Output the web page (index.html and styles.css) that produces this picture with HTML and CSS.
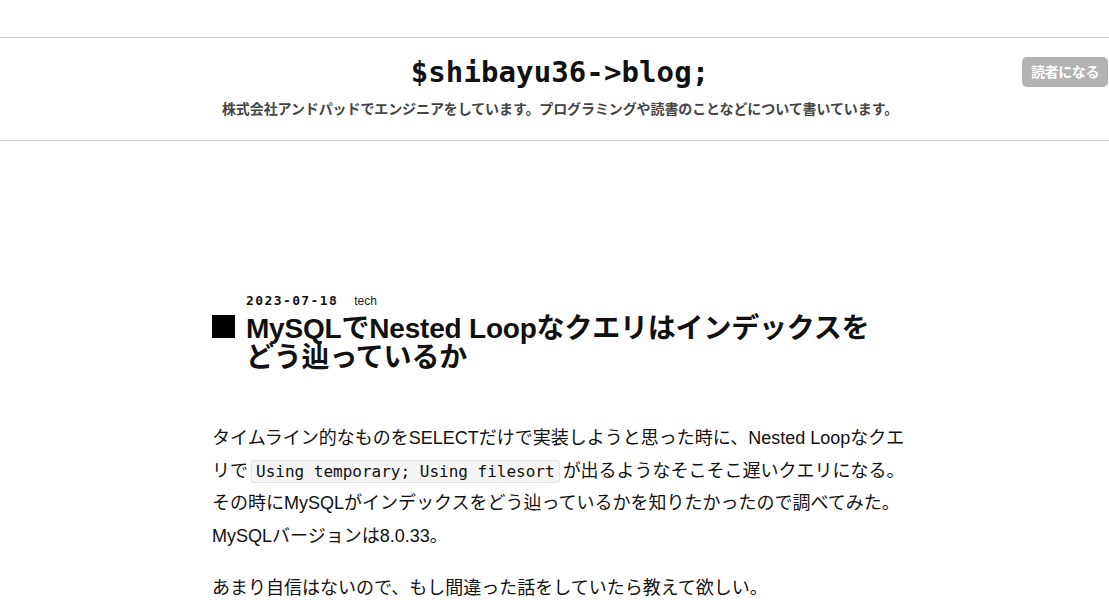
FILE: index.html
```html
<!DOCTYPE html>
<html lang="ja">
<head>
<meta charset="utf-8">
<title>$shibayu36->blog;</title>
<link rel="stylesheet" href="styles.css">
</head>
<body>
<div class="topbar"></div>
<header class="blog-header">
  <h1 class="blog-title">$shibayu36-&gt;blog;</h1>
  <p class="blog-desc">株式会社アンドパッドでエンジニアをしています。プログラミングや読書のことなどについて書いています。</p>
  <a class="subscribe">読者になる</a>
</header>
<main class="content">
  <article class="entry">
    <div class="entry-meta">
      <span class="entry-date">2023-07-18</span>
      <span class="entry-cat">tech</span>
    </div>
    <h2 class="entry-title"><span class="square"></span><span class="title-text">MySQLでNested Loopなクエリはインデックスをどう辿っているか</span></h2>
    <div class="entry-body">
      <p>タイムライン的なものをSELECTだけで実装しようと思った時に、Nested Loopなクエリで<code>Using temporary; Using filesort</code>が出るようなそこそこ遅いクエリになる。その時にMySQLがインデックスをどう辿っているかを知りたかったので調べてみた。MySQLバージョンは8.0.33。</p>
      <p>あまり自信はないので、もし間違った話をしていたら教えて欲しい。</p>
    </div>
  </article>
</main>
</body>
</html>
```
FILE: styles.css
```css
html, body {
  margin: 0;
  padding: 0;
  background: #fff;
  color: #111;
  font-family: "Liberation Sans", Arial, "Noto Sans CJK JP", sans-serif;
}
.topbar {
  height: 37px;
  border-bottom: 1px solid #cfcfcf;
}
.blog-header {
  position: relative;
  height: 103px;
  border-bottom: 1px solid #cfcfcf;
  box-sizing: border-box;
  display: flex;
  flex-direction: column;
  align-items: center;
  padding: 17px 0 0 11px;
}
.blog-title {
  margin: 0;
  font-family: "DejaVu Sans Mono", "Liberation Mono", monospace;
  font-weight: bold;
  font-size: 29px;
  line-height: 34px;
  color: #111;
  letter-spacing: 0.1px;
}
.blog-desc {
  margin: 10px 0 0;
  font-family: "Noto Sans CJK JP", sans-serif;
  font-weight: bold;
  font-size: 14px;
  line-height: 19px;
  color: #444;
  letter-spacing: -0.1px;
}
.subscribe {
  position: absolute;
  right: 1px;
  top: 19px;
  width: 86px;
  height: 30px;
  line-height: 29px;
  text-align: center;
  background: #b3b3b3;
  color: #fff;
  font-family: "Noto Sans CJK JP", sans-serif;
  font-weight: bold;
  font-size: 14px;
  letter-spacing: -0.4px;
  border-radius: 5px;
}
.content {
  margin-left: calc(50% - 342.5px);
  width: 700px;
  padding-top: 152px;
}
.entry-meta {
  padding-left: 34px;
  display: flex;
  align-items: baseline;
  gap: 16px;
  height: 18px;
}
.entry-date {
  font-family: "DejaVu Sans Mono", "Liberation Mono", monospace;
  font-weight: bold;
  font-size: 13px;
  letter-spacing: 1.4px;
  color: #111;
}
.entry-cat {
  font-size: 12px;
  color: #222;
}
.entry-title {
  margin: 3px 0 0;
  display: flex;
  align-items: flex-start;
  gap: 11px;
  font-family: "Liberation Sans", Arial, "Noto Sans CJK JP", sans-serif;
  font-weight: bold;
  font-size: 28px;
  line-height: 29px;
  color: #111;
  letter-spacing: -0.2px;
}
.square {
  flex: none;
  width: 23px;
  height: 23px;
  margin-top: 1px;
  background: #000;
}
.title-text {
  width: 640px;
}
.entry-body {
  margin-top: 50px;
  font-size: 18px;
  line-height: 32.5px;
  color: #111;
}
.entry-body p {
  margin: 0 0 20px;
}
.entry-body code {
  font-family: "DejaVu Sans Mono", "Liberation Mono", monospace;
  font-size: 16px;
  line-height: 20px;
  background: #f5f5f5;
  border: 1px solid #e4e4e4;
  border-radius: 3px;
  padding: 1px 4px;
  margin: 0 3px;
}
```
